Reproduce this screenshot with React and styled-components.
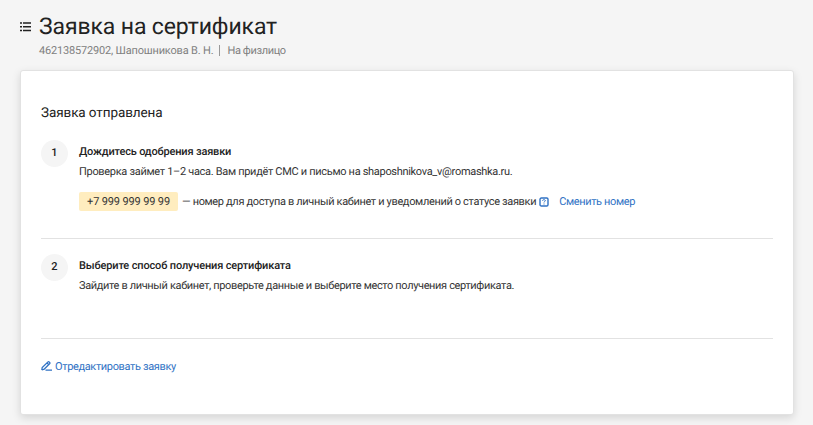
import React from "react";
import styled, { createGlobalStyle } from "styled-components";

const Global = createGlobalStyle`
  * { box-sizing: border-box; }
  html, body { margin: 0; background: #f5f5f5; }
  body { font-family: Roboto, "Liberation Sans", sans-serif; color: #222; overflow: hidden; text-rendering: geometricPrecision; }
`;
const Page = styled.main`
  height: 425px;
  padding: 12px 19px 0 20px;
  background: #f5f5f5;
`;
const Header = styled.header`
  display: flex;
  align-items: flex-start;
  height: 58px;
`;
const MenuIcon = styled.svg`
  width: 12px;
  height: 10px;
  margin: 10px 7px 0 0;
  flex: none;
`;
const Text = styled.span`
  display: block;
  white-space: nowrap;
  letter-spacing: ${(p) => p.$track || 0}px;
`;
const Title = styled.h1`
  margin: 1px 0 0;
  font-size: 23px;
  line-height: 28px;
  font-weight: 450;
  white-space: nowrap;
  letter-spacing: -0.12px;
`;
const Subtitle = styled.div`
  display: flex;
  margin-top: 3px;
  font-size: 11px;
  line-height: 14px;
  color: #808080;
`;
const Separator = styled.span`
  width: 1px;
  height: 11px;
  margin: 1px 7px 0 6px;
  background: #999;
`;
const Card = styled.section`
  height: 345px;
  padding: 33px 20px 0 20px;
  border: 1px solid #e2e2e2;
  border-radius: 3px;
  background: #fff;
  box-shadow: 0 3px 8px rgba(0, 0, 0, 0.13);
`;
const CardTitle = styled.h2`
  margin: 0;
  font-size: 13.5px;
  line-height: 18px;
  font-weight: 450;
  letter-spacing: -0.09px;
`;
const Step = styled.article`
  display: flex;
  height: ${(p) => p.$height}px;
  padding-top: ${(p) => p.$top}px;
  border-bottom: 1px solid #e2e2e2;
`;
const StepNumber = styled.div`
  flex: none;
  width: 27px;
  height: 27px;
  margin-right: 11px;
  border-radius: 50%;
  background: #f5f5f5;
  font-size: 11px;
  line-height: 26px;
  font-weight: 500;
  text-align: center;
`;
const StepBody = styled.div`
  padding-top: 2px;
  font-size: 11px;
  line-height: 20px;
  color: #333;
`;
const StepTitle = styled(Text)`
  color: #222;
  font-weight: 480;
`;
const PhoneRow = styled.div`
  display: flex;
  align-items: center;
  height: 19px;
  margin-top: 10px;
`;
const Phone = styled.span`
  width: 99px;
  height: 19px;
  margin-right: 4px;
  border-radius: 2px;
  background: #ffedbf;
  line-height: 19px;
  text-align: center;
  white-space: nowrap;
  letter-spacing: -0.14px;
`;
const HelpIcon = styled.svg`
  flex: none;
  width: 10px;
  height: 10px;
  margin: 0 10px 0 3px;
`;
const Link = styled.a`
  color: #3072c4;
  font-size: 11px;
  white-space: nowrap;
  letter-spacing: -0.36px;
`;
const Footer = styled.footer`
  display: flex;
  align-items: center;
  height: 20px;
  margin-top: 17px;
`;
const EditIcon = styled.svg`
  width: 11px;
  height: 10px;
  margin-right: 3px;
`;

export default function App() {
  return (
    <>
      <Global />
      <Page>
        <Header>
          <MenuIcon viewBox="0 0 12 10" fill="#222">
            <path d="M0 .3h2v1.5H0zM3 .3h8v1.5H3zM0 4h2v1.6H0zM3 4h8v1.6H3zM0 7.8h2v1.4H0zM3 7.8h8v1.4H3z" />
          </MenuIcon>
          <div>
            <Title>Заявка на сертификат</Title>
            <Subtitle>
              <Text $track={-0.18}>462138572902, Шапошникова В. Н.</Text>
              <Separator />
              <Text $track={-0.36}>На физлицо</Text>
            </Subtitle>
          </div>
        </Header>
        <Card>
          <CardTitle>Заявка отправлена</CardTitle>
          <Step $height={117} $top={18}>
            <StepNumber>1</StepNumber>
            <StepBody>
              <StepTitle $track={-0.17}>Дождитесь одобрения заявки</StepTitle>
              <Text $track={-0.31}>Проверка займет 1–2 часа. Вам придёт СМС и письмо на shaposhnikova_v@romashka.ru.</Text>
              <PhoneRow>
                <Phone>+7 999 999 99 99</Phone>
                <Text $track={-0.345}>— номер для доступа в личный кабинет и уведомлений о статусе заявки</Text>
                <HelpIcon viewBox="0 0 10 10" fill="none" stroke="#3072c4">
                  <rect x="1" y="1" width="8" height="8" rx="1.3" strokeWidth="1.4" />
                  <path d="M3.6 3.8V3.4c0-.9 2.8-.9 2.8.2 0 .8-1.4.8-1.4 1.9M5 6.5v1" />
                </HelpIcon>
                <Link>Сменить номер</Link>
              </PhoneRow>
            </StepBody>
          </Step>
          <Step $height={100} $top={15}>
            <StepNumber>2</StepNumber>
            <StepBody>
              <StepTitle $track={-0.15}>Выберите способ получения сертификата</StepTitle>
              <Text $track={-0.355}>Зайдите в личный кабинет, проверьте данные и выберите место получения сертификата.</Text>
            </StepBody>
          </Step>
          <Footer>
            <EditIcon viewBox="0 0 11 10" fill="none" stroke="#3072c4" strokeWidth="1.3">
              <path d="M.8 9l.4-2.5L7 .9c.7-.7 2.5.8 1.8 1.6L3.2 8.2L.8 9M6 2l1.8 1.8M4.5 9.2H11" />
            </EditIcon>
            <Link>Отредактировать заявку</Link>
          </Footer>
        </Card>
      </Page>
    </>
  );
}
